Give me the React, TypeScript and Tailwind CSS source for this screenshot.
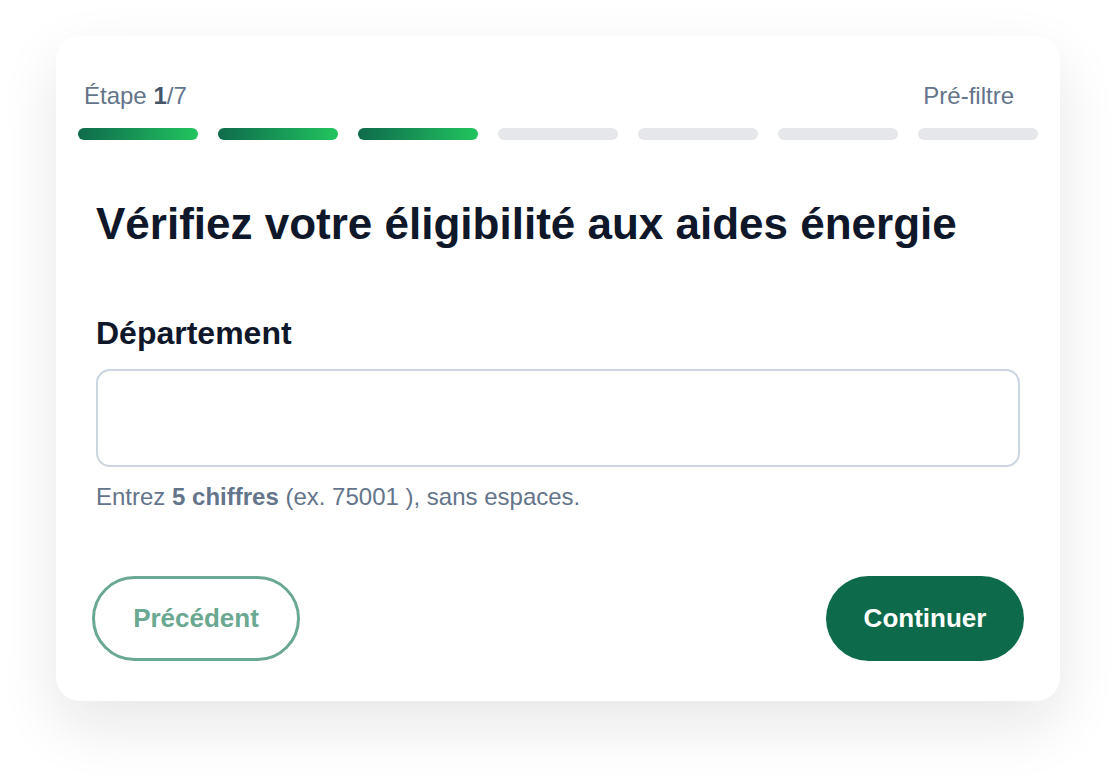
import { useState } from 'react'

const steps = [true, true, true, false, false, false, false]

export default function App() {
  const [dep, setDep] = useState('')

  return (
    <div className="min-h-screen bg-white pl-[56px] pt-[36px] font-['Liberation_Sans',Arial,sans-serif]">
      <div className="w-[1004px] h-[665px] bg-white rounded-[24px] shadow-[0_24px_60px_rgba(15,23,42,0.10)] flex flex-col">
        {/* progress header */}
        <div className="flex items-center justify-between pl-[28px] pr-[46px] pt-[46px] leading-[28px] text-[24px] text-[#64748b]">
          <span>Étape <b className="text-[#475569]">1</b>/7</span>
          <span>Pré-filtre</span>
        </div>
        <div className="flex gap-[20px] px-[22px] mt-[18px]">
          {steps.map((done, i) => (
            <div
              key={i}
              className={done
                ? 'h-[12px] flex-1 rounded-full bg-gradient-to-r from-[#0f6b4b] to-[#22c55e]'
                : 'h-[12px] flex-1 rounded-full bg-[#e5e7eb]'}
            />
          ))}
        </div>

        <div className="px-[40px] flex flex-col">
          <h1 className="mt-[58px] text-[44px] leading-[52px] font-bold text-[#0f172a]">
            Vérifiez votre éligibilité aux aides énergie
          </h1>

          <label className="mt-[64px] text-[32px] leading-[38px] font-bold text-[#0f172a]">Département</label>
          <input
            value={dep}
            onChange={e => setDep(e.target.value)}
            className="mt-[17px] h-[98px] w-full rounded-[14px] border-2 border-[#cbd5e1] px-5 text-[24px] outline-none"
          />
          <p className="mt-[15px] text-[24px] leading-[30px] text-[#64748b]">
            Entrez <b>5 chiffres</b> (ex. 75001 ), sans espaces.
          </p>

          <div className="mt-[64px] flex items-center justify-between -mx-[4px]">
            <button className="h-[85px] w-[208px] rounded-full border-[3px] border-[#6aa891] text-[26px] font-bold text-[#6aa891]">
              Précédent
            </button>
            <button className="h-[85px] w-[198px] rounded-full bg-[#0d6b4b] text-[26px] font-bold text-white">
              Continuer
            </button>
          </div>
        </div>
      </div>
    </div>
  )
}
